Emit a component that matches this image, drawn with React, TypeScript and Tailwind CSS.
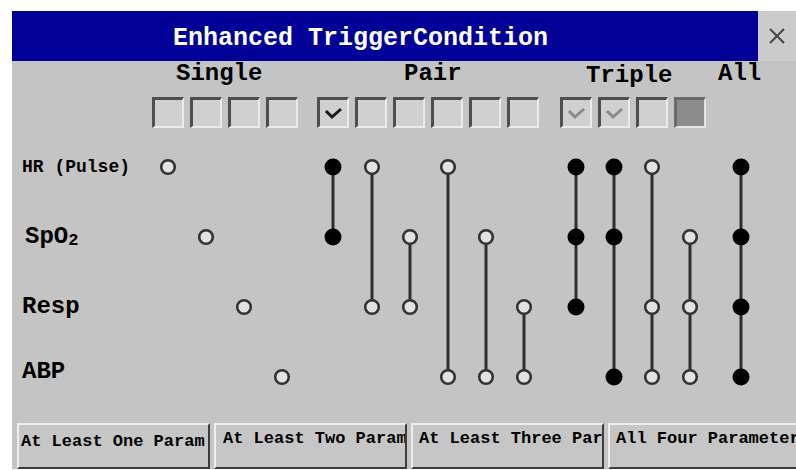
import React from "react";

const mono = { fontFamily: '"Courier New", "Liberation Mono", monospace' };

type Col = { x: number; nodes: { row: number; filled: boolean }[] };

// row centres inside the chart svg
const rowY = [35, 105, 175, 245];

const open = (row: number) => ({ row, filled: false });
const solid = (row: number) => ({ row, filled: true });

// columns of the trigger chart (x is relative to the svg's left edge)
const columns: Col[] = [
  { x: 16, nodes: [open(0)] },
  { x: 54, nodes: [open(1)] },
  { x: 92, nodes: [open(2)] },
  { x: 130, nodes: [open(3)] },
  { x: 181, nodes: [solid(0), solid(1)] },
  { x: 220, nodes: [open(0), open(2)] },
  { x: 258, nodes: [open(1), open(2)] },
  { x: 296, nodes: [open(0), open(3)] },
  { x: 334, nodes: [open(1), open(3)] },
  { x: 372, nodes: [open(2), open(3)] },
  { x: 424, nodes: [solid(0), solid(1), solid(2)] },
  { x: 462, nodes: [solid(0), solid(1), solid(3)] },
  { x: 500, nodes: [open(0), open(2), open(3)] },
  { x: 538, nodes: [open(1), open(2), open(3)] },
  { x: 589, nodes: [solid(0), solid(1), solid(2), solid(3)] },
];

type BoxState = "empty" | "checked" | "grayChecked" | "filled";

function CheckBox({ state = "empty" }: { state?: BoxState }) {
  if (state === "filled") {
    return (
      <div className="w-[32px] h-[31px] border-t-[3px] border-l-[3px] border-t-[#6a6a6a] border-l-[#6a6a6a] border-b-2 border-r-2 border-b-[#e4e4e4] border-r-[#e4e4e4] bg-[#8c8c8c]" />
    );
  }
  return (
    <div className="w-[32px] h-[31px] border-t-[3px] border-l-[3px] border-t-[#4e4e4e] border-l-[#4e4e4e] border-b-2 border-r-2 border-b-[#ebebeb] border-r-[#ebebeb] bg-[#d0d0d0] flex items-center justify-center">
      {state !== "empty" && (
        <svg width="20" height="14" viewBox="0 0 20 14">
          <polyline
            points="2,5 8,11 17,3"
            fill="none"
            stroke={state === "checked" ? "#1a1a1a" : "#8a8a8a"}
            strokeWidth="3"
          />
        </svg>
      )}
    </div>
  );
}

function ParamButton({ label, pad }: { label: string; pad: string }) {
  return (
    <div
      className={`w-[193px] h-[46px] shrink-0 overflow-hidden whitespace-nowrap bg-[#c6c6c6] border-t-2 border-l-2 border-t-[#eeeeee] border-l-[#eeeeee] border-b-2 border-r-2 border-b-[#3c3c3c] border-r-[#3c3c3c] text-[17px] font-bold text-black leading-[20px] ${pad}`}
    >
      {label}
    </div>
  );
}

export default function App() {
  return (
    <div className="w-[796px] h-[470px] bg-white pl-[12px] pt-[11px] overflow-hidden" style={mono}>
      <div className="h-[458px] bg-[#c4c4c4] flex flex-col">
        {/* title bar */}
        <div className="flex h-[50px]">
          <div className="flex-1 bg-[#000096] flex items-center pl-[161px] pt-[5px] text-white text-[25px] font-bold">
            Enhanced TriggerCondition
          </div>
          <div className="w-[38px] bg-[#cbcbcb] flex items-center justify-center">
            <svg width="18" height="18" viewBox="0 0 18 18">
              <line x1="2" y1="2" x2="16" y2="16" stroke="#444" strokeWidth="2" />
              <line x1="16" y1="2" x2="2" y2="16" stroke="#444" strokeWidth="2" />
            </svg>
          </div>
        </div>

        {/* group headers */}
        <div className="flex h-[26px] items-center text-[24px] font-bold text-black">
          <div className="w-[392px] pl-[164px]">Single</div>
          <div className="w-[182px]">Pair</div>
          <div className="w-[132px] mt-[4px]">Triple</div>
          <div>All</div>
        </div>

        {/* checkboxes */}
        <div className="flex mt-[10px] pl-[140px]">
          <div className="flex gap-[6px]">
            <CheckBox />
            <CheckBox />
            <CheckBox />
            <CheckBox />
          </div>
          <div className="flex gap-[6px] ml-[19px]">
            <CheckBox state="checked" />
            <CheckBox />
            <CheckBox />
            <CheckBox />
            <CheckBox />
            <CheckBox />
          </div>
          <div className="flex gap-[6px] ml-[21px]">
            <CheckBox state="grayChecked" />
            <CheckBox state="grayChecked" />
            <CheckBox />
            <CheckBox state="filled" />
          </div>
        </div>

        {/* chart */}
        <div className="flex mt-[4px]">
          <div className="w-[140px] flex flex-col font-bold text-black">
            <div className="h-[70px] flex items-center pl-[10px] text-[18px]">HR (Pulse)</div>
            <div className="h-[70px] flex items-center pl-[13px] text-[24px]">
              SpO<sub className="text-[17px] relative top-[4px]">2</sub>
            </div>
            <div className="h-[70px] flex items-center pl-[10px] text-[24px]">Resp</div>
            <div className="h-[70px] flex items-center pl-[10px] pb-[10px] text-[24px]">ABP</div>
          </div>
          <svg width="644" height="280" viewBox="0 0 644 280">
            {columns.map((c) => {
              const ys = c.nodes.map((n) => rowY[n.row]);
              return (
                <g key={c.x}>
                  {ys.length > 1 && (
                    <line
                      x1={c.x}
                      x2={c.x}
                      y1={Math.min(...ys)}
                      y2={Math.max(...ys)}
                      stroke="#2e2e2e"
                      strokeWidth="3"
                    />
                  )}
                  {c.nodes.map((n) =>
                    n.filled ? (
                      <circle key={n.row} cx={c.x} cy={rowY[n.row]} r="8.5" fill="#000" />
                    ) : (
                      <circle
                        key={n.row}
                        cx={c.x}
                        cy={rowY[n.row]}
                        r="6.8"
                        fill="#e2e2e2"
                        stroke="#333"
                        strokeWidth="2.6"
                      />
                    )
                  )}
                </g>
              );
            })}
          </svg>
        </div>

        {/* action buttons */}
        <div className="flex gap-[4px] pl-[5px] mt-auto">
          <ParamButton label="At Least One Param" pad="pl-[2px] pt-[7px]" />
          <ParamButton label="At Least Two Param" pad="pl-[7px] pt-[4px]" />
          <ParamButton label="At Least Three Par" pad="pl-[6px] pt-[4px]" />
          <ParamButton label="All Four Parameter" pad="pl-[6px] pt-[4px]" />
        </div>
      </div>
    </div>
  );
}
